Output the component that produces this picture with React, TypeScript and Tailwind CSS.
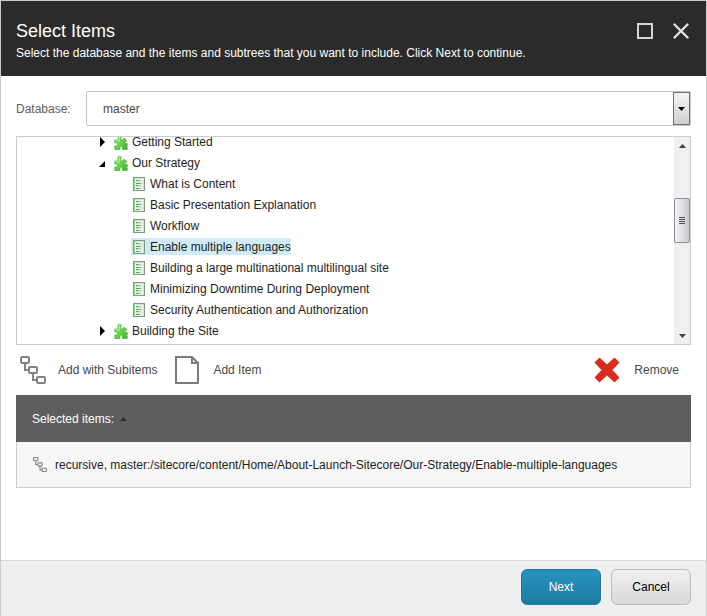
import React from "react";

type TreeItem = {
  label: string;
  kind: "folder" | "page";
  open?: boolean;
  selected?: boolean;
};

const treeItems: TreeItem[] = [
  { label: "Getting Started", kind: "folder" },
  { label: "Our Strategy", kind: "folder", open: true },
  { label: "What is Content", kind: "page" },
  { label: "Basic Presentation Explanation", kind: "page" },
  { label: "Workflow", kind: "page" },
  { label: "Enable multiple languages", kind: "page", selected: true },
  { label: "Building a large multinational multilingual site", kind: "page" },
  { label: "Minimizing Downtime During Deployment", kind: "page" },
  { label: "Security Authentication and Authorization", kind: "page" },
  { label: "Building the Site", kind: "folder" },
];

function PuzzleIcon() {
  return (
    <svg width="14" height="16" viewBox="0 0 14 16" className="shrink-0" aria-hidden="true">
      <defs>
        <linearGradient id="puzzle" x1="0" y1="0" x2="1" y2="1">
          <stop offset="0" stopColor="#9aee78" />
          <stop offset="0.5" stopColor="#62d843" />
          <stop offset="1" stopColor="#3fae33" />
        </linearGradient>
      </defs>
      <path
        d="M4.4 6 V4.2 C3.4 3 3.8 1.4 5.6 1.4 C7.4 1.4 7.8 3 6.9 4.2 V6 H9.3 C9 4.6 9.8 4.2 10.8 4.6 L12.6 6.6 C12.6 7.6 11.6 8.2 10.6 7.8 L10 9.6 H13.2 V12 H11.8 V12.8 H13.2 V15.4 H8.4 V12.8 C8 11.6 6.4 11.6 6 12.8 V15.4 H.8 V12 C3 12.2 3.8 11.4 3.6 10 C3.4 8.8 2.2 8.6 .8 9 V6 Z"
        fill="url(#puzzle)"
        stroke="#55a84a"
        strokeWidth="0.8"
        strokeLinejoin="round"
      />
      <path d="M5.6 2.4 V6.8 H1.6" fill="none" stroke="#c0f7a6" strokeWidth="0.9" />
    </svg>
  );
}

function PageIcon() {
  return (
    <svg width="12" height="14" viewBox="0 0 12 14" className="shrink-0" aria-hidden="true">
      <rect x="0.5" y="0.5" width="11" height="13" fill="#eaf4e8" stroke="#7f9c82" />
      <path d="M1 1.5 H11 M10.5 1 V13" stroke="#d3e2d2" />
      <path d="M1.5 1 V13" stroke="#93d38f" />
      <path d="M3 3.5 H5 M3 6.5 H7 M3 8.5 H5 M3 11.5 H6" stroke="#4fa256" />
      <path d="M5 3.5 H8 M7 6.5 H9 M5 8.5 H8 M6 11.5 H8" stroke="#a9c6a9" />
      <path d="M3 4.5 H9 M3 9.5 H9" stroke="#cfe6cc" />
    </svg>
  );
}

function SubitemsIcon({ small = false }: { small?: boolean }) {
  return (
    <svg
      width={small ? 14 : 26}
      height={small ? 15 : 28}
      viewBox="0 0 26 28"
      fill="none"
      stroke="#828282"
      strokeWidth="2"
      className="shrink-0"
      aria-hidden="true"
    >
      <rect x="1" y="1" width="8" height="6" rx="1" />
      <rect x="9" y="11" width="8" height="6" rx="1" />
      <rect x="17" y="21" width="8" height="6" rx="1" />
      <path d="M5 7 V14 H9 M13 17 V24 H17" />
    </svg>
  );
}

function FileIcon() {
  return (
    <svg width="24" height="28" viewBox="0 0 24 28" fill="none" stroke="#7c7c7c" strokeWidth="2" aria-hidden="true">
      <path d="M1 1 H17 L23 7 V27 H1 Z" />
      <path d="M17 1 V7 H23" />
    </svg>
  );
}

function RemoveIcon() {
  return (
    <svg width="26" height="26" viewBox="0 0 26 26" aria-hidden="true">
      <path
        d="M5.5 1.5 L13 8.5 L20.5 1.5 L24.5 5.5 L17.5 13 L24.5 20.5 L20.5 24.5 L13 17.5 L5.5 24.5 L1.5 20.5 L8.5 13 L1.5 5.5 Z"
        fill="#d92b20"
        stroke="#d92b20"
        strokeWidth="1.5"
        strokeLinejoin="round"
      />
    </svg>
  );
}

function Arrow({ up = false, className = "" }: { up?: boolean; className?: string }) {
  return (
    <svg width="7" height="4" viewBox="0 0 7 4" className={className} fill="currentColor" aria-hidden="true">
      <path d={up ? "M0 4 L3.5 0 L7 4 Z" : "M0 0 H7 L3.5 4 Z"} />
    </svg>
  );
}

function TreeRow({ item }: { item: TreeItem }) {
  const folder = item.kind === "folder";
  return (
    <li
      role="treeitem"
      aria-selected={!!item.selected}
      className={`flex h-[21px] items-center ${folder ? "pl-[81px]" : "pl-[114px]"}`}
    >
      {folder && (
        <svg width="8" height="10" viewBox="0 0 8 10" className="mr-2 shrink-0" aria-hidden="true">
          <path d={item.open ? "M7 3 V9 H1 Z" : "M2 0 L7 5 L2 10 Z"} fill="#000" />
        </svg>
      )}
      <span className={`flex h-[17px] items-center whitespace-nowrap ${folder ? "gap-1" : "gap-[5px] pl-0.5"} ${item.selected ? "bg-[#d0ebf6]" : ""}`}>
        {folder ? <PuzzleIcon /> : <PageIcon />}
        {item.label}
      </span>
    </li>
  );
}

export default function App() {
  return (
    <div className="flex min-h-screen flex-col border-x border-t border-[#cccccc] bg-white font-['Liberation_Sans',Arial,sans-serif] text-[12px] leading-4 text-[#1e1e1e]">
      <header className="flex items-start justify-between bg-[#2b2b2b] pt-[18px] pr-[17px] pb-[14px] pl-[15px] text-white">
        <div>
          <h1 className="text-[18px] leading-[25px]">Select Items</h1>
          <p className="leading-[18px]">Select the database and the items and subtrees that you want to include. Click Next to continue.</p>
        </div>
        <div className="flex gap-5 pt-1">
          <button type="button" aria-label="Maximize">
            <svg width="16" height="16" viewBox="0 0 16 16" fill="none" stroke="#d4d4d4" strokeWidth="2">
              <rect x="1" y="1" width="14" height="14" />
            </svg>
          </button>
          <button type="button" aria-label="Close">
            <svg width="16" height="16" viewBox="0 0 16 16" fill="none" stroke="#e2e2e2" strokeWidth="2.4" strokeLinecap="round">
              <path d="M1.5 1.5 L14.5 14.5 M14.5 1.5 L1.5 14.5" />
            </svg>
          </button>
        </div>
      </header>

      <main className="grow px-[15px] pt-[15px] pb-4">
        <div className="flex items-center">
          <label htmlFor="database" className="w-[70px] shrink-0 text-[#5e5e5e]">Database:</label>
          <div className="relative grow">
            <select id="database" defaultValue="master" className="block h-[35px] w-full appearance-none rounded-[2px] border border-[#c6c6c6] bg-white pl-4 text-[#474747]">
              <option>master</option>
            </select>
            <span className="pointer-events-none absolute top-px right-px bottom-px flex w-[17px] items-center justify-center border border-[#707070] bg-linear-to-b from-[#f4f4f4] to-[#d0d0d0] text-black">
              <Arrow />
            </span>
          </div>
        </div>

        <div className="mt-2.5 flex h-[209px] border border-[#cccccc]">
          <div className="grow overflow-hidden">
            <ul role="tree" aria-label="Content" className="-mt-1.5">
              {treeItems.map((item) => (
                <TreeRow key={item.label} item={item} />
              ))}
            </ul>
          </div>
          <div className="flex w-4 shrink-0 flex-col bg-[#f0f0f0] text-[#404040]">
            <button type="button" aria-label="Scroll up" className="flex h-[17px] items-center justify-center">
              <Arrow up />
            </button>
            <div className="grow pt-11">
              <div className="flex h-[45px] flex-col items-center justify-center gap-px rounded-[2px] border border-[#8e8f98] bg-linear-to-r from-[#f5f5f6] to-[#c6c9d0]">
                <span className="h-px w-1.5 bg-[#505050]" />
                <span className="h-px w-1.5 bg-[#505050]" />
                <span className="h-px w-1.5 bg-[#505050]" />
                <span className="h-px w-1.5 bg-[#505050]" />
              </div>
            </div>
            <button type="button" aria-label="Scroll down" className="flex h-[17px] items-center justify-center">
              <Arrow />
            </button>
          </div>
        </div>

        <div className="flex h-[50px] items-center pr-3 pl-1 text-[#474747]">
          <button type="button" className="flex items-center gap-3">
            <SubitemsIcon />
            Add with Subitems
          </button>
          <button type="button" className="ml-[18px] flex items-center gap-3.5">
            <FileIcon />
            Add Item
          </button>
          <button type="button" className="ml-auto flex items-center gap-3.5">
            <RemoveIcon />
            Remove
          </button>
        </div>

        <table className="w-full border-separate border-spacing-0 text-left">
          <thead>
            <tr>
              <th scope="col" className="h-[47px] bg-[#5e5e5e] px-4 font-normal text-white">
                <span className="flex items-center gap-1.5">
                  Selected items:
                  <Arrow up className="text-[#2b2b2b]" />
                </span>
              </th>
            </tr>
          </thead>
          <tbody>
            <tr>
              <td className="h-[46px] border border-t-0 border-[#cccccc] bg-[#f7f7f7] px-4">
                <span className="flex items-center gap-2">
                  <SubitemsIcon small />
                  recursive, master:/sitecore/content/Home/About-Launch-Sitecore/Our-Strategy/Enable-multiple-languages
                </span>
              </td>
            </tr>
          </tbody>
        </table>
      </main>

      <footer className="flex justify-end gap-2.5 border-t border-[#d9d9d9] bg-[#efefef] px-[15px] pt-2 pb-[11px]">
        <button type="button" className="h-9 w-20 rounded-md border border-[#22799c] bg-linear-to-b from-[#2694c0] to-[#1f7ba0] text-white">
          Next
        </button>
        <button type="button" className="h-9 w-20 rounded-md border border-[#bdbdbd] bg-linear-to-b from-[#f0f0f0] to-[#d9d9d9] text-black">
          Cancel
        </button>
      </footer>
    </div>
  );
}
